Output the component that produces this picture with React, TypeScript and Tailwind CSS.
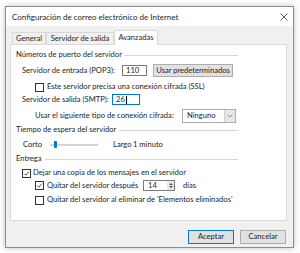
import React from 'react';

const font = "font-['Lato','Liberation_Sans',sans-serif]";

const Checkbox = ({ checked }: { checked?: boolean }) => (
  <span className="flex h-[9px] w-[9px] shrink-0 items-center justify-center border border-[#333] bg-white">
    {checked && (
      <svg viewBox="0 0 9 9" className="h-[9px] w-[9px]">
        <path d="M1.5 4.6 L3.6 6.7 L7.6 2" fill="none" stroke="#222" strokeWidth="1" />
      </svg>
    )}
  </span>
);

const GroupHeader = ({ label }: { label: string }) => (
  <div className="ml-[5px] flex h-[10px] w-[222px] items-center gap-[3px]">
    <span className="whitespace-nowrap">{label}</span>
    <span className="h-px flex-1 bg-[#d5d5d5]" />
  </div>
);

const Tab = ({ label, width, active }: { label: string; width: string; active?: boolean }) => (
  <div
    className={`${width} ${
      active
        ? 'relative z-10 -mb-px flex h-[15px] items-center justify-center border border-b-0 border-[#d9d9d9] bg-white'
        : 'flex h-[12px] items-center justify-center border border-b-0 border-[#d9d9d9] bg-[#f0f0f0]'
    }`}
  >
    {label}
  </div>
);

export default function App() {
  return (
    <div className={`h-[253px] w-[300px] overflow-hidden whitespace-nowrap bg-white pl-[5px] pt-[6px] text-[7.6px] leading-none text-[#1e1e1e] ${font}`}>
      <div className="flex h-[242px] w-[289px] flex-col border border-[#8c8c8c] bg-[#f0f0f0] shadow-[0_0_6px_rgba(0,0,0,0.25)]">
        {/* title bar */}
        <div className="flex h-[19px] items-center justify-between bg-white pl-[6px] pr-[5px]">
          <span className="text-[8px]">Configuración de correo electrónico de Internet</span>
          <svg viewBox="0 0 8 8" className="h-[8px] w-[8px]">
            <path d="M0.5 0.5 L7.5 7.5 M7.5 0.5 L0.5 7.5" stroke="#333" strokeWidth="0.8" />
          </svg>
        </div>

        {/* tabs */}
        <div className="mt-[3px] flex h-[15px] items-end pl-[6px]">
          <Tab label="General" width="w-[34px]" />
          <Tab label="Servidor de salida" width="w-[68px]" />
          <Tab label="Avanzadas" width="w-[44px]" active />
        </div>

        {/* panel */}
        <div className="ml-[4px] flex h-[177px] w-[277px] flex-col border border-[#d9d9d9] bg-white pt-[5px]">
          <GroupHeader label="Números de puerto del servidor" />

          <div className="ml-[11px] mt-[4px] flex h-[13px] items-center">
            <span className="w-[100px]">Servidor de entrada (POP3):</span>
            <span className="flex h-[11px] w-[25px] items-center border border-[#7a7a7a] pl-[3px]">110</span>
            <span className="ml-[6px] flex h-[13px] w-[80px] items-center justify-center border border-[#adadad] bg-[#e1e1e1]">
              Usar predeterminados
            </span>
          </div>

          <div className="ml-[24px] mt-[5px] flex h-[10px] items-center gap-[3px]">
            <Checkbox />
            <span>Este servidor precisa una conexión cifrada (SSL)</span>
          </div>

          <div className="ml-[11px] mt-[2px] flex h-[11px] items-center">
            <span className="w-[90px]">Servidor de salida (SMTP):</span>
            <span className="flex h-[11px] w-[28px] items-center border border-[#0078d7] pl-[3px]">
              26<span className="ml-px h-[8px] w-px bg-black" />
            </span>
          </div>

          <div className="ml-[24px] mt-[4px] flex h-[14px] items-center">
            <span className="w-[147px]">Usar el siguiente tipo de conexión cifrada:</span>
            <span className="flex h-[14px] w-[54px] items-center border border-[#adadad] bg-white">
              <span className="flex-1 pl-[4px]">Ninguno</span>
              <span className="flex h-full w-[11px] items-center justify-center border-l border-[#cfcfcf] bg-[#e8e8e8]">
                <svg viewBox="0 0 6 4" className="h-[4px] w-[6px]">
                  <path d="M0.5 0.5 L3 3 L5.5 0.5" fill="none" stroke="#777" strokeWidth="0.8" />
                </svg>
              </span>
            </span>
          </div>

          <div className="mt-[2px]">
            <GroupHeader label="Tiempo de espera del servidor" />
          </div>

          <div className="ml-[12px] mt-[5px] flex h-[10px] items-center">
            <span className="w-[27px]">Corto</span>
            <span className="relative flex h-[10px] w-[48px] items-center">
              <span className="h-[2px] w-full bg-[#d6d6d6]" />
              <span className="absolute left-[4px] top-[1px] h-[7px] w-[3px] rounded-[1px] bg-[#0078d7]" />
            </span>
            <span className="ml-[15px] w-[20px]">Largo</span>
            <span>1 minuto</span>
          </div>

          <div className="mt-[4px]">
            <GroupHeader label="Entrega" />
          </div>

          <div className="ml-[11px] mt-[4px] flex h-[10px] items-center gap-[2px]">
            <Checkbox checked />
            <span>Dejar una copia de los mensajes en el servidor</span>
          </div>

          <div className="ml-[24px] mt-[2px] flex h-[11px] items-center">
            <Checkbox checked />
            <span className="ml-[3px] w-[96px]">Quitar del servidor después</span>
            <span className="flex h-[11px] w-[32px] items-center border border-[#7a7a7a] bg-white">
              <span className="flex-1 pl-[4px]">14</span>
              <span className="flex h-full w-[7px] flex-col items-center justify-center gap-[1px] bg-[#e8e8e8]">
                <svg viewBox="0 0 4 2" className="h-[2px] w-[4px]">
                  <path d="M0 2 L2 0 L4 2 Z" fill="#555" />
                </svg>
                <svg viewBox="0 0 4 2" className="h-[2px] w-[4px]">
                  <path d="M0 0 L2 2 L4 0 Z" fill="#555" />
                </svg>
              </span>
            </span>
            <span className="ml-[8px]">días</span>
          </div>

          <div className="ml-[24px] mt-[4px] flex h-[10px] items-center gap-[3px]">
            <Checkbox />
            <span>Quitar del servidor al eliminar de 'Elementos eliminados'</span>
          </div>
        </div>

        {/* buttons */}
        <div className="mt-[9px] flex justify-end gap-[6px] pr-[7px]">
          <span className="flex h-[14px] w-[46px] items-center justify-center border border-[#0078d7] bg-[#e1e1e1]">
            Aceptar
          </span>
          <span className="flex h-[14px] w-[46px] items-center justify-center border border-[#adadad] bg-[#e1e1e1]">
            Cancelar
          </span>
        </div>
      </div>
    </div>
  );
}
